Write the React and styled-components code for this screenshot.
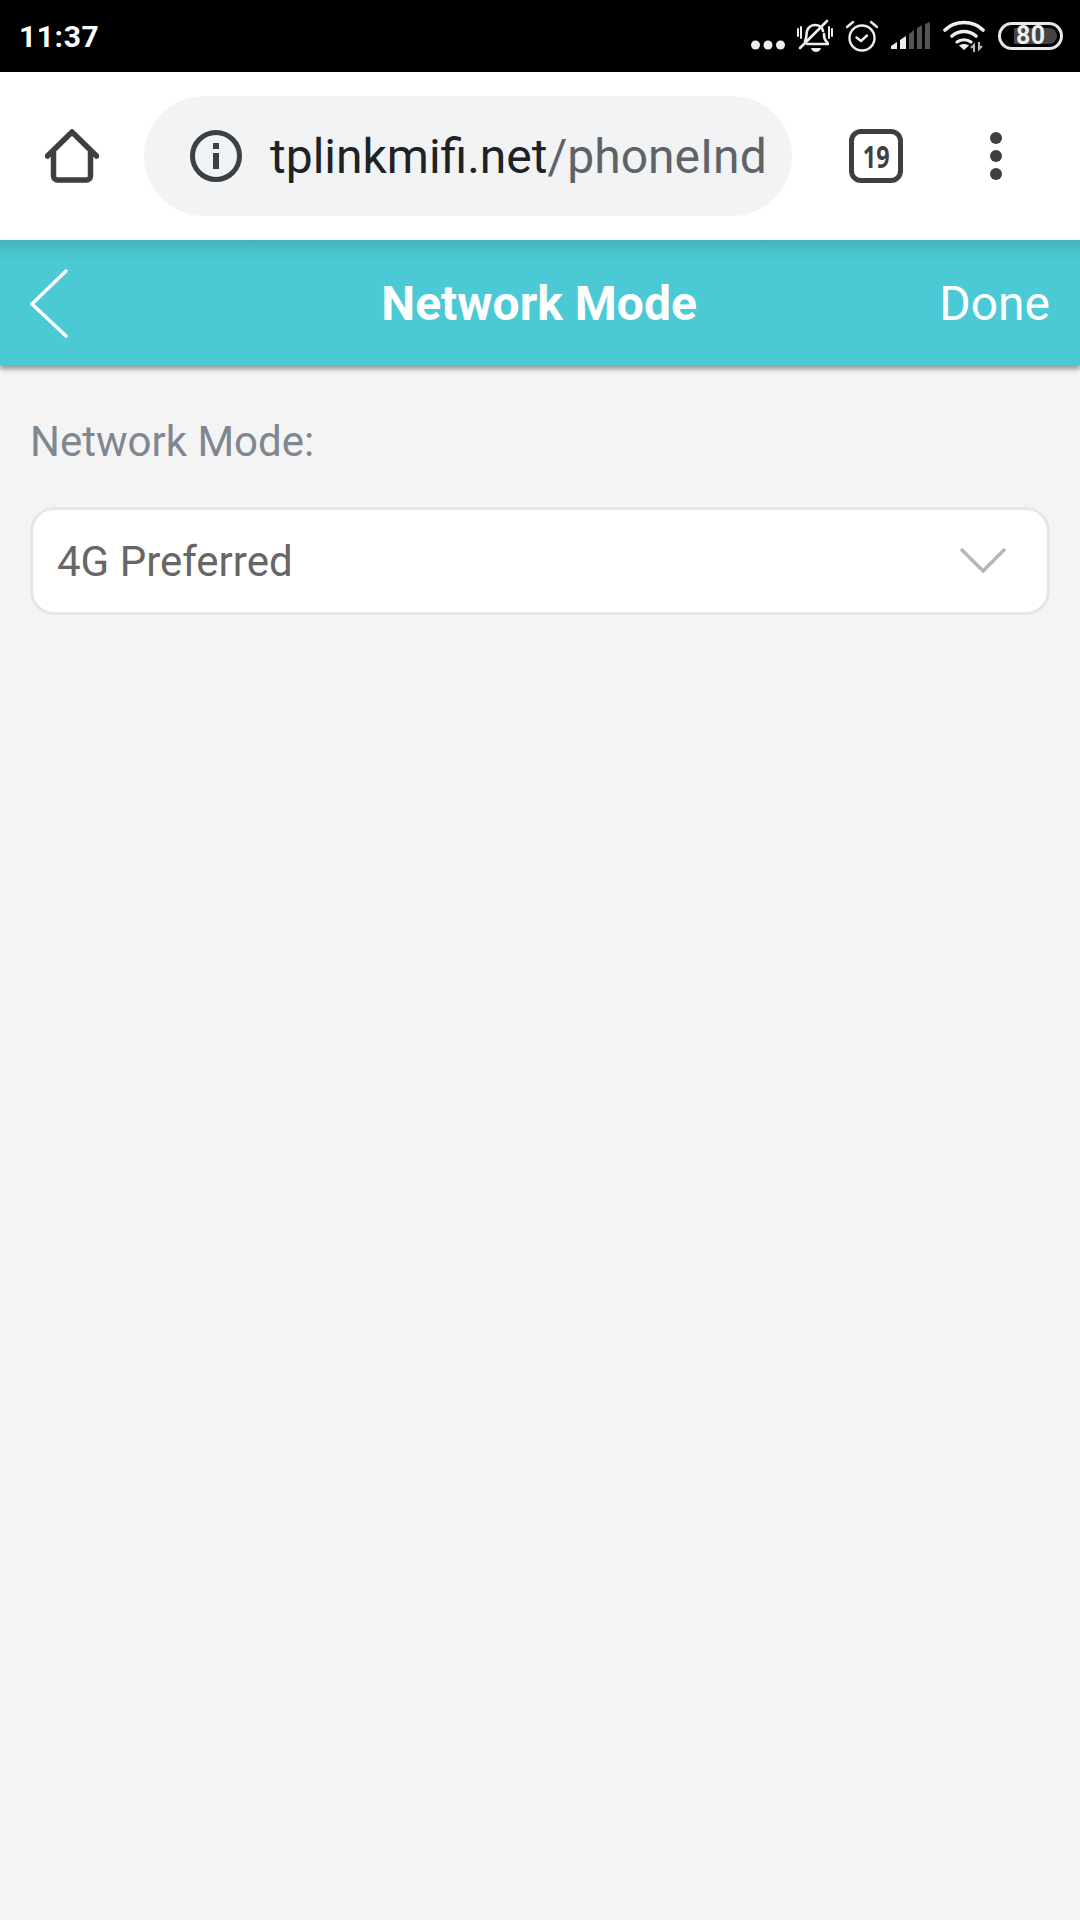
import styled, { createGlobalStyle } from "styled-components";

const GlobalStyle = createGlobalStyle`
  html, body {
    margin: 0;
    padding: 0;
    background: #f4f4f4;
  }
  * {
    box-sizing: border-box;
  }
`;

const Page = styled.div`
  width: 1080px;
  height: 1920px;
  display: flex;
  flex-direction: column;
  overflow: hidden;
  font-family: Roboto, "Liberation Sans", sans-serif;
  background: #f4f4f4;
`;

const StatusBar = styled.div`
  height: 72px;
  flex: none;
  background: #000;
  color: #fff;
  display: flex;
  align-items: center;
  justify-content: space-between;
  padding: 0 17px 0 19px;
`;

const Clock = styled.span`
  font-size: 30px;
  font-weight: 700;
  letter-spacing: 0.6px;
`;

const StatusIcons = styled.div`
  display: flex;
  align-items: center;
  gap: 12px;
`;

const Battery = styled.div`
  width: 65px;
  height: 28px;
  border: 3px solid #e8e8e8;
  border-radius: 14px;
  padding: 3px 3px 3px 13px;
  display: flex;
  margin-left: 1px;
`;

const BatteryFill = styled.div`
  flex: 1;
  background: #444;
  border-radius: 0 8px 8px 0;
  display: flex;
  align-items: center;
  font-size: 25px;
  font-weight: 700;
  color: #eee;
  line-height: 16px;
  letter-spacing: 0.5px;
  padding-left: 2px;
`;

const BrowserBar = styled.div`
  height: 168px;
  flex: none;
  background: #fff;
  display: flex;
  align-items: center;
  padding-left: 45px;
`;

const UrlPill = styled.div`
  width: 648px;
  height: 120px;
  margin-left: 45px;
  border-radius: 60px;
  background: #f1f3f4;
  display: flex;
  align-items: center;
  padding: 0 27px 0 46px;
  gap: 28px;
`;

const UrlText = styled.div`
  font-size: 48px;
  color: #202124;
  white-space: nowrap;
  flex: 1;
  span {
    color: #5f6368;
  }
`;

const TabCount = styled.div`
  width: 54px;
  height: 54px;
  margin-left: 57px;
  border: 5px solid #3c4043;
  border-radius: 12px;
  display: flex;
  align-items: center;
  justify-content: center;
  color: #3c4043;
  span {
    font-family: "Open Sans", Roboto, sans-serif;
    font-size: 30px;
    font-weight: 700;
    letter-spacing: 0;
    transform: scaleX(0.78);
  }
`;

const MenuDots = styled.div`
  margin-left: 87px;
  display: flex;
  flex-direction: column;
  gap: 6px;
  i {
    display: block;
    width: 12px;
    height: 12px;
    border-radius: 50%;
    background: #3c4043;
  }
`;

const Header = styled.div`
  height: 126px;
  flex: none;
  background: linear-gradient(#43b3bb 0, #49c2cc 12px, #4bcad6 24px);
  box-shadow: 0 3px 5px rgba(60, 70, 90, 0.55);
  display: flex;
  align-items: center;
  padding: 0 30px;
  position: relative;
`;

const BackArrow = styled.svg`
  width: 40px;
  height: 70px;
  flex: none;
`;

const Title = styled.div`
  flex: 1;
  text-align: center;
  font-size: 48px;
  font-weight: 700;
  color: #fff;
  padding-left: 69px;
`;

const Done = styled.div`
  font-size: 48px;
  color: #fff;
`;

const Content = styled.div`
  flex: 1;
  padding: 0 30px;
`;

const FieldLabel = styled.div`
  margin-top: 53px;
  font-size: 42px;
  line-height: 46px;
  color: #7f8790;
`;

const Select = styled.div`
  margin-top: 42px;
  height: 108px;
  background: #fff;
  border: 3px solid #e6e6e6;
  border-radius: 24px;
  display: flex;
  align-items: center;
  justify-content: space-between;
  padding: 0 40px 0 24px;
  font-size: 42px;
  color: #666;
`;

const HomeIcon = () => (
  <svg width="54" height="54" viewBox="0 0 54 54" style={{ flex: "none" }}>
    <path
      d="M2.5 27 27 3 51.5 27M8.5 22V47a4 4 0 0 0 4 4h29a4 4 0 0 0 4-4V22"
      fill="none"
      stroke="#3c4043"
      strokeWidth="5.5"
      strokeLinecap="round"
      strokeLinejoin="round"
    />
  </svg>
);

const InfoIcon = () => (
  <svg width="52" height="52" viewBox="0 0 52 52" style={{ flex: "none" }}>
    <circle cx="26" cy="26" r="23.5" fill="none" stroke="#3c4043" strokeWidth="5" />
    <rect x="23" y="13" width="6" height="6" fill="#3c4043" />
    <rect x="23" y="23" width="6" height="16" fill="#3c4043" />
  </svg>
);

const BellOff = () => (
  <svg width="36" height="34" viewBox="0 0 36 34">
    <g fill="none" stroke="#eee" strokeWidth="2.6" strokeLinecap="round" strokeLinejoin="round">
      <path d="M8 22c2-3 1-6 2-10 1-3 4-6 8-6s7 2 8 6M27 15c0 3 0 5 2 7 1 1 2 2 2 3H10" />
      <path d="M3 29 30 2" />
      <path d="M1 10v7M4 8v11M32 8v11M35 10v7" strokeWidth="2" />
    </g>
    <path d="M14 29h10c-1 3-3 4-5 4s-4-1-5-4z" fill="#eee" />
  </svg>
);

const AlarmIcon = () => (
  <svg width="34" height="32" viewBox="0 0 34 32">
    <g fill="none" stroke="#eee" strokeWidth="2.4" strokeLinecap="round" strokeLinejoin="round">
      <circle cx="17" cy="18" r="12.5" />
      <path d="M11.5 17.5 16 21l6-5.5" />
      <path d="M2 7l6-5M32 7l-6-5" />
    </g>
  </svg>
);

const SignalIcon = () => (
  <svg width="40" height="28" viewBox="0 0 40 28">
    <path d="M0 27V24L6 20V27z" fill="#eee" />
    <path d="M9 18 15 14V27H9z" fill="#eee" />
    <path d="M18 12 23 8V27H18z" fill="#555" />
    <path d="M26 6 31 3V27H26z" fill="#555" />
    <path d="M34 2 39 0V27H34z" fill="#555" />
  </svg>
);

const WifiIcon = () => (
  <svg width="42" height="32" viewBox="0 0 42 32">
    <g fill="none" stroke="#eee" strokeWidth="3.6" strokeLinecap="round">
      <path d="M2 10C12 0 30 0 40 10" />
      <path d="M9 16c7-6 17-6 24 0" />
      <path d="M14 22c4-3 10-3 14 0" strokeWidth="3.2" />
    </g>
    <path d="M16 25.5c3-2 7-2 10 0l-5 4.5z" fill="#eee" />
    <path d="M31 32V25l-3 3M36 22v7l3-3" fill="none" stroke="#bbb" strokeWidth="2" />
  </svg>
);

const DotsIcon = () => (
  <svg width="34" height="10" viewBox="0 0 34 10" style={{ marginTop: 18 }}>
    <circle cx="4.5" cy="5" r="4.5" fill="#eee" />
    <circle cx="17" cy="5" r="4.5" fill="#eee" />
    <circle cx="29.5" cy="5" r="4.5" fill="#eee" />
  </svg>
);

export default function App() {
  return (
    <Page>
      <GlobalStyle />
      <StatusBar>
        <Clock>11:37</Clock>
        <StatusIcons>
          <DotsIcon />
          <BellOff />
          <AlarmIcon />
          <SignalIcon />
          <WifiIcon />
          <Battery>
            <BatteryFill>80</BatteryFill>
          </Battery>
        </StatusIcons>
      </StatusBar>
      <BrowserBar>
        <HomeIcon />
        <UrlPill>
          <InfoIcon />
          <UrlText>
            tplinkmifi.net<span>/phoneInd</span>
          </UrlText>
        </UrlPill>
        <TabCount>
          <span>19</span>
        </TabCount>
        <MenuDots>
          <i />
          <i />
          <i />
        </MenuDots>
      </BrowserBar>
      <Header>
        <BackArrow viewBox="0 0 40 70">
          <path
            d="M36 3 2 36 36 68"
            fill="none"
            stroke="#fff"
            strokeWidth="3.4"
            strokeLinecap="round"
          />
        </BackArrow>
        <Title>Network Mode</Title>
        <Done>Done</Done>
      </Header>
      <Content>
        <FieldLabel>Network Mode:</FieldLabel>
        <Select>
          4G Preferred
          <svg width="48" height="28" viewBox="0 0 48 28">
            <path d="M2 2 24 24 46 2" fill="none" stroke="#b4b6b8" strokeWidth="3.4" />
          </svg>
        </Select>
      </Content>
    </Page>
  );
}
